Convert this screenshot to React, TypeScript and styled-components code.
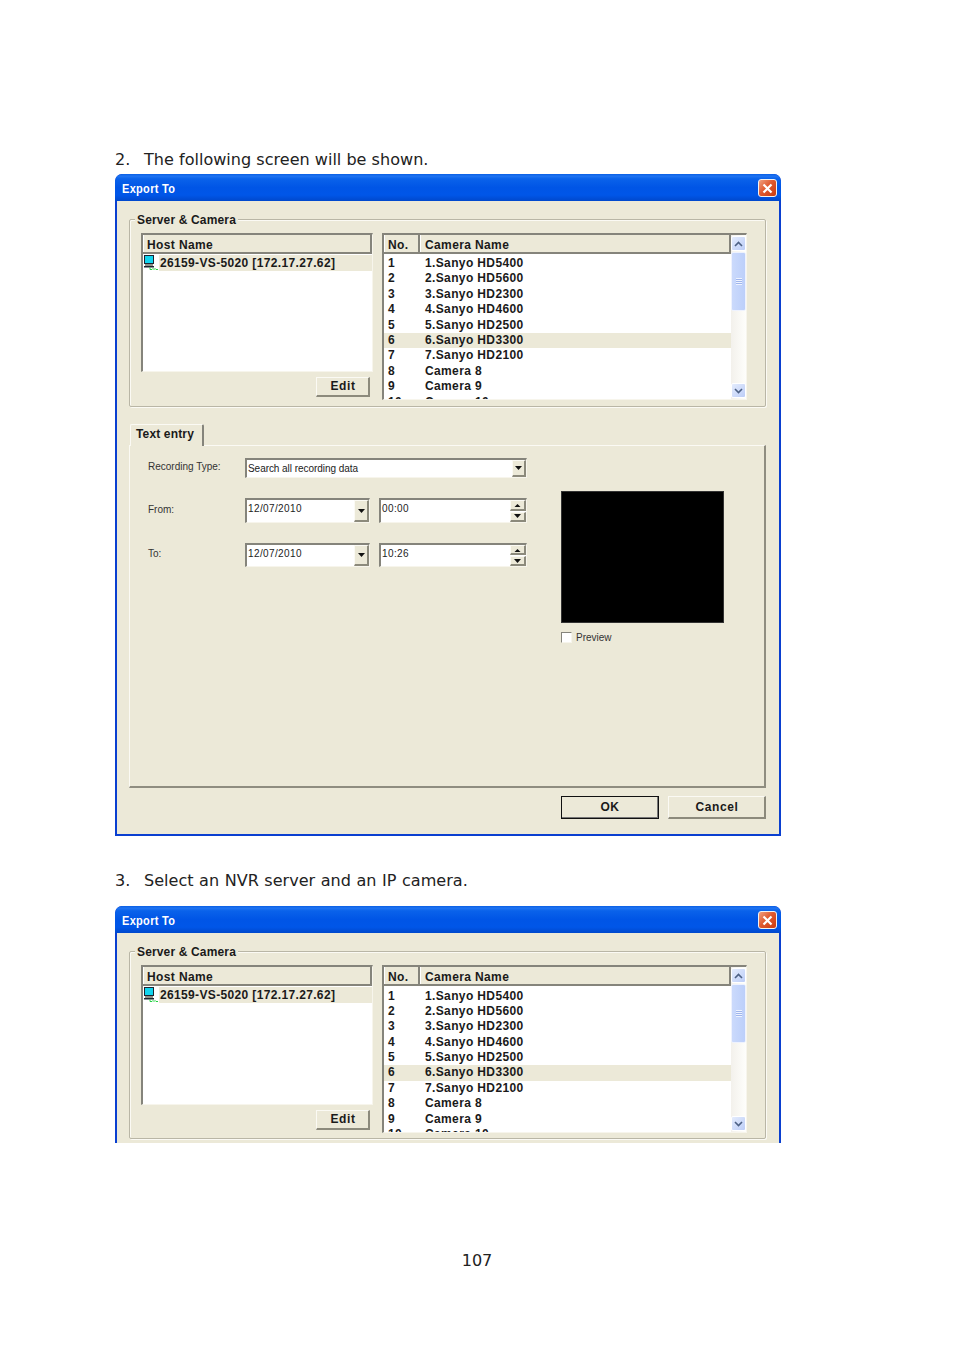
import React from "react";
import styled, { createGlobalStyle } from "styled-components";

const Global = createGlobalStyle`
  html, body { margin: 0; padding: 0; background: #fff; }
  * { box-sizing: border-box; }
`;

const Page = styled.main`
  width: 954px;
  height: 1350px;
  padding: 150px 0 0 115px;
  background: #fff;
  overflow: hidden;
`;
const Step = styled.p<{ $top?: number; $bottom: number; $wordGap?: number }>`
  display: flex;
  margin: ${(p) => p.$top ?? 0}px 0 ${(p) => p.$bottom}px;
  height: 20px;
  font: 400 16.07px/20px "DejaVu Sans", Verdana, sans-serif;
  word-spacing: ${(p) => p.$wordGap ?? 0}px;
  color: #222;
`;
const StepNo = styled.span`
  width: 29px;
`;
const PageNo = styled.p`
  margin: 108px 0 0 -115px;
  width: 954px;
  text-align: center;
  font: 400 16.07px/20px "DejaVu Sans", Verdana, sans-serif;
  color: #222;
`;

const Win = styled.section<{ $clipped?: boolean }>`
  width: 666px;
  height: ${(p) => (p.$clipped ? 237 : 662)}px;
  background: #0a3fd0;
  border-radius: 7px 7px 0 0;
  padding: 0 2px ${(p) => (p.$clipped ? 0 : 2)}px;
  display: flex;
  flex-direction: column;
  overflow: hidden;
`;
const TitleBar = styled.header`
  height: 27px;
  margin: 0 -2px;
  padding: 0 4px 0 7px;
  display: flex;
  align-items: center;
  justify-content: space-between;
  background: linear-gradient(180deg, #0a5fe4 0%, #1f74f2 8%, #0a62ea 18%, #0055e6 50%, #0056e8 78%, #0048cc 100%);
  border-radius: 7px 7px 0 0;
`;
const TitleText = styled.h1`
  margin: 3px 0 0;
  font: 700 12.5px/15px "Liberation Sans", Arial, sans-serif;
  letter-spacing: 0.35px;
  color: #fff;
  transform: scaleX(0.88);
  transform-origin: left center;
`;
const CloseBtn = styled.button`
  width: 19px;
  height: 18px;
  margin-top: 1px;
  padding: 0;
  display: grid;
  place-items: center;
  border: 1px solid #f2f2f2;
  border-radius: 3px;
  background: linear-gradient(135deg, #f0a080 0%, #e05a30 45%, #c93a10 100%);
`;
const Body = styled.div`
  flex: 1;
  background: #ece9d8;
  padding: 18px 13px 0 12px;
`;

const Group = styled.fieldset`
  position: relative;
  margin: 0;
  height: 188px;
  padding: 13px 18px 0 11px;
  border: 1px solid #b9b6a6;
  box-shadow: inset 1px 1px 0 #fbfaf4, 1px 1px 0 #fbfaf4;
  border-radius: 2px;
  display: grid;
  grid-template-columns: 232px 365px;
  column-gap: 9px;
  align-items: start;
`;
const GroupLegend = styled.span`
  position: absolute;
  left: 5px;
  top: -7px;
  padding: 0 2px;
  background: #ece9d8;
  font: 700 12px/14px "Liberation Sans", Arial, sans-serif;
  letter-spacing: 0.15px;
  color: #1a1a1a;
`;
const HostColumn = styled.div`
  display: flex;
  flex-direction: column;
  align-items: flex-end;
`;
const ListBox = styled.div<{ $h: number }>`
  width: 100%;
  height: ${(p) => p.$h}px;
  background: #fff;
  border-style: solid;
  border-width: 2px 1px 1px 2px;
  border-color: #85847b #f7f5ec #f7f5ec #85847b;
  overflow: hidden;
`;
const HeaderRow = styled.div`
  display: flex;
  height: 19px;
  background: #ece9d8;
  border-bottom: 2px solid #85847b;
`;
const HeadCell = styled.div<{ $w?: number; $pad?: number }>`
  flex: ${(p) => (p.$w ? `0 0 ${p.$w}px` : 1)};
  padding-left: ${(p) => p.$pad ?? 3}px;
  padding-top: 1px;
  border-right: 2px solid #85847b;
  border-left: 1px solid #fff;
  font: 700 12px/18px "Liberation Sans", Arial, sans-serif;
  letter-spacing: 0.38px;
  color: #1a1a1a;
`;
const HostRow = styled.div`
  display: flex;
  align-items: center;
  height: 16px;
  margin-top: 1px;
  padding-left: 1px;
`;
const HostIcon = styled.svg`
  flex: none;
  width: 15px;
  height: 16px;
`;
const HostLabel = styled.div`
  flex: 1;
  height: 16px;
  padding-left: 1px;
  background: #ece9d8;
  font: 700 12px/16px "Liberation Sans", Arial, sans-serif;
  letter-spacing: 0.35px;
  color: #1a1a1a;
  white-space: nowrap;
`;
const Btn = styled.button<{ $primary?: boolean; $w: number; $h: number }>`
  width: ${(p) => p.$w}px;
  height: ${(p) => p.$h}px;
  padding: 0 0 1px 1px;
  background: #ece9d8;
  border-style: solid;
  border-width: 1px 2px 2px 1px;
  border-color: #fbfaf4 #8c8a7c #8c8a7c #fbfaf4;
  font: 700 12px/1 "Liberation Sans", Arial, sans-serif;
  letter-spacing: 0.6px;
  color: #1a1a1a;
  ${(p) => p.$primary && `outline: 1px solid #111; outline-offset: -1px; border-color: #111 #777 #777 #111;`}
`;
const EditBtn = styled(Btn)`
  margin: 5px 3px 0 0;
`;

const CameraBox = styled.div<{ $h: number }>`
  display: flex;
  height: ${(p) => p.$h}px;
  background: #fff;
  border-style: solid;
  border-width: 2px 1px 1px 2px;
  border-color: #85847b #f7f5ec #f7f5ec #85847b;
  overflow: hidden;
`;
const CameraMain = styled.div`
  flex: 1;
  min-width: 0;
`;
const CamRows = styled.ul<{ $top: number }>`
  margin: 0;
  padding: ${(p) => p.$top}px 0 0;
  list-style: none;
`;
const CamRow = styled.li<{ $sel?: boolean }>`
  display: flex;
  height: 15.4px;
  background: ${(p) => (p.$sel ? "#ece9d8" : "transparent")};
  font: 700 12px/15.4px "Liberation Sans", Arial, sans-serif;
  letter-spacing: 0.37px;
  color: #1a1a1a;
  white-space: nowrap;
`;
const CamNo = styled.span`
  flex: 0 0 41px;
  padding-left: 4px;
`;

const Scroll = styled.div`
  flex: 0 0 15px;
  padding: 1px 0;
  display: flex;
  flex-direction: column;
  background: linear-gradient(90deg, #f3f1ec, #fefefb);
`;
const ScrollBtn = styled.div`
  flex: none;
  height: 15px;
  display: grid;
  place-items: center;
  background: linear-gradient(135deg, #e4ecfd, #bccdf7);
  border: 1px solid #fff;
  border-radius: 2px;
`;
const Thumb = styled.div`
  flex: none;
  height: 59px;
  margin-top: 1px;
  display: grid;
  place-items: center;
  background: linear-gradient(90deg, #cbdafc, #bccffa);
  border: 1px solid #eef2fe;
  border-radius: 2px;
`;
const Grip = styled.span`
  width: 6px;
  height: 7px;
  background: repeating-linear-gradient(180deg, #eef3ff 0 1px, #9fb5ec 1px 2px);
`;
const Track = styled.div`
  flex: 1;
`;

const TabStrip = styled.div`
  height: 22px;
  margin: 17px 0 -1px 1px;
  position: relative;
  z-index: 1;
`;
const Tab = styled.div`
  width: 74px;
  height: 22px;
  padding-left: 5px;
  background: #ece9d8;
  border-style: solid;
  border-width: 1px 2px 0 1px;
  border-color: #fbfaf4 #85847b #ece9d8 #fbfaf4;
  border-radius: 2px 2px 0 0;
  font: 700 12px/18px "Liberation Sans", Arial, sans-serif;
  letter-spacing: 0.15px;
  color: #1a1a1a;
`;
const Panel = styled.div`
  height: 343px;
  display: flex;
  border-style: solid;
  border-width: 1px 2px 2px 1px;
  border-color: #fbfaf4 #8f8d80 #8f8d80 #fbfaf4;
`;
const Form = styled.div`
  flex: 0 0 397px;
  padding: 12px 0 0 18px;
  display: grid;
  grid-template-columns: 97px 125px 157px;
  grid-template-rows: 20px 25px 24px;
  row-gap: 20px;
  align-content: start;
  font: 400 10px/14px "Liberation Sans", Arial, sans-serif;
`;
const FormLabel = styled.label`
  align-self: center;
  padding-bottom: 2px;
  color: #333;
`;
const Field = styled.div<{ $span?: boolean; $offset?: boolean }>`
  ${(p) => p.$span && "grid-column: 2 / 4;"}
  ${(p) => p.$offset && "margin-left: 9px;"}
  display: flex;
  background: #fff;
  border-style: solid;
  border-width: 2px 1px 1px 2px;
  border-color: #85847b #f7f5ec #f7f5ec #85847b;
  overflow: hidden;
  color: #222;
`;
const FieldText = styled.span<{ $num?: boolean }>`
  flex: 1;
  padding: ${(p) => (p.$num ? "2px 0 0 1px" : "1px 0 0 1px")};
  line-height: ${(p) => (p.$num ? 13 : 15)}px;
  letter-spacing: ${(p) => (p.$num ? 0.38 : -0.05)}px;
  white-space: nowrap;
`;
const ArrowBtn = styled.span<{ $w: number }>`
  flex: none;
  width: ${(p) => p.$w}px;
  display: grid;
  place-items: center;
  background: #ece9d8;
  border-style: solid;
  border-width: 1px 2px 2px 1px;
  border-color: #fbfaf4 #8c8a7c #8c8a7c #fbfaf4;
`;
const SpinStack = styled.span`
  flex: none;
  width: 16px;
  display: grid;
  grid-template-rows: 1fr 1fr;
  gap: 1px;
`;
const PreviewCol = styled.div`
  padding: 45px 0 0 34px;
`;
const PreviewBox = styled.div`
  width: 163px;
  height: 132px;
  background: #000;
  border: 1px solid #333;
`;
const CheckRow = styled.label`
  display: flex;
  align-items: center;
  gap: 4px;
  margin-top: 9px;
  font: 400 10px/11px "Liberation Sans", Arial, sans-serif;
  color: #333;
`;
const CheckBox = styled.span`
  width: 11px;
  height: 11px;
  background: #fff;
  border-style: solid;
  border-width: 1px;
  border-color: #85847b #f7f5ec #f7f5ec #85847b;
`;
const Footer = styled.footer`
  display: flex;
  justify-content: flex-end;
  gap: 9px;
  margin-top: 8px;
`;

const Chevron = ({ up }: { up?: boolean }) => (
  <svg width="9" height="6" viewBox="0 0 9 6">
    <path d={up ? "M1 5L4.5 1.5L8 5" : "M1 1L4.5 4.5L8 1"} fill="none" stroke="#4d6185" strokeWidth="1.6" />
  </svg>
);
const Tri = ({ up }: { up?: boolean }) => (
  <svg width="7" height="4" viewBox="0 0 7 4">
    <path d={up ? "M0.5 4H6.5L3.5 1Z" : "M0 0H7L3.5 4Z"} fill="#111" />
  </svg>
);

const cameras = [
  "1.Sanyo HD5400",
  "2.Sanyo HD5600",
  "3.Sanyo HD2300",
  "4.Sanyo HD4600",
  "5.Sanyo HD2500",
  "6.Sanyo HD3300",
  "7.Sanyo HD2100",
  "Camera 8",
  "Camera 9",
  "Camera 10",
];

const ServerCamera = ({ lower }: { lower?: boolean }) => (
  <Group>
    <GroupLegend>Server &amp; Camera</GroupLegend>
    <HostColumn>
      <ListBox $h={lower ? 140 : 139}>
        <HeaderRow>
          <HeadCell>Host Name</HeadCell>
        </HeaderRow>
        <HostRow>
          <HostIcon viewBox="0 0 15 16">
            <rect x="0" y="0" width="10" height="9" fill="#1c2430" />
            <rect x="1" y="1" width="8" height="7" fill="#12d4ee" />
            <rect x="1" y="9" width="8" height="2" fill="#8f8f86" />
            <rect x="0" y="11" width="10" height="1.5" fill="#1c2430" />
            <path d="M6 12.5V14.5H8L9 13.5L10 14.5L11 13.5L12 14.5H14" fill="none" stroke="#22d040" strokeWidth="1" />
          </HostIcon>
          <HostLabel>26159-VS-5020 [172.17.27.62]</HostLabel>
        </HostRow>
      </ListBox>
      <EditBtn $w={54} $h={20}>Edit</EditBtn>
    </HostColumn>
    <CameraBox $h={lower ? 168 : 167}>
      <CameraMain>
        <HeaderRow>
          <HeadCell $w={36}>No.</HeadCell>
          <HeadCell $pad={4}>Camera Name</HeadCell>
        </HeaderRow>
        <CamRows $top={lower ? 2.5 : 2}>
          {cameras.map((c, i) => (
            <CamRow key={c} $sel={i === 5}>
              <CamNo>{i + 1}</CamNo>
              <span>{c}</span>
            </CamRow>
          ))}
        </CamRows>
      </CameraMain>
      <Scroll>
        <ScrollBtn><Chevron up /></ScrollBtn>
        <Thumb><Grip /></Thumb>
        <Track />
        <ScrollBtn><Chevron /></ScrollBtn>
      </Scroll>
    </CameraBox>
  </Group>
);

const WindowTitle = () => (
  <TitleBar>
    <TitleText>Export To</TitleText>
    <CloseBtn aria-label="Close">
      <svg width="11" height="11" viewBox="0 0 11 11">
        <path d="M1.5 1.5L9.5 9.5M9.5 1.5L1.5 9.5" stroke="#fff" strokeWidth="2.2" />
      </svg>
    </CloseBtn>
  </TitleBar>
);

const Spin = () => (
  <SpinStack>
    <ArrowBtn $w={16}><Tri up /></ArrowBtn>
    <ArrowBtn $w={16}><Tri /></ArrowBtn>
  </SpinStack>
);

export default function App() {
  return (
    <Page>
      <Global />
      <Step $bottom={4}>
        <StepNo>2.</StepNo>
        The following screen will be shown.
      </Step>
      <Win>
        <WindowTitle />
        <Body>
          <ServerCamera />
          <TabStrip>
            <Tab>Text entry</Tab>
          </TabStrip>
          <Panel>
            <Form>
              <FormLabel>Recording Type:</FormLabel>
              <Field $span>
                <FieldText>Search all recording data</FieldText>
                <ArrowBtn $w={14}><Tri /></ArrowBtn>
              </Field>
              <FormLabel>From:</FormLabel>
              <Field>
                <FieldText $num>12/07/2010</FieldText>
                <ArrowBtn $w={15}><Tri /></ArrowBtn>
              </Field>
              <Field $offset>
                <FieldText $num>00:00</FieldText>
                <Spin />
              </Field>
              <FormLabel>To:</FormLabel>
              <Field>
                <FieldText $num>12/07/2010</FieldText>
                <ArrowBtn $w={15}><Tri /></ArrowBtn>
              </Field>
              <Field $offset>
                <FieldText $num>10:26</FieldText>
                <Spin />
              </Field>
            </Form>
            <PreviewCol>
              <PreviewBox />
              <CheckRow>
                <CheckBox />
                Preview
              </CheckRow>
            </PreviewCol>
          </Panel>
          <Footer>
            <Btn $primary $w={98} $h={23}>OK</Btn>
            <Btn $w={98} $h={23}>Cancel</Btn>
          </Footer>
        </Body>
      </Win>
      <Step $top={35} $bottom={15} $wordGap={0.43}>
        <StepNo>3.</StepNo>
        Select an NVR server and an IP camera.
      </Step>
      <Win $clipped>
        <WindowTitle />
        <Body>
          <ServerCamera lower />
        </Body>
      </Win>
      <PageNo>107</PageNo>
    </Page>
  );
}
